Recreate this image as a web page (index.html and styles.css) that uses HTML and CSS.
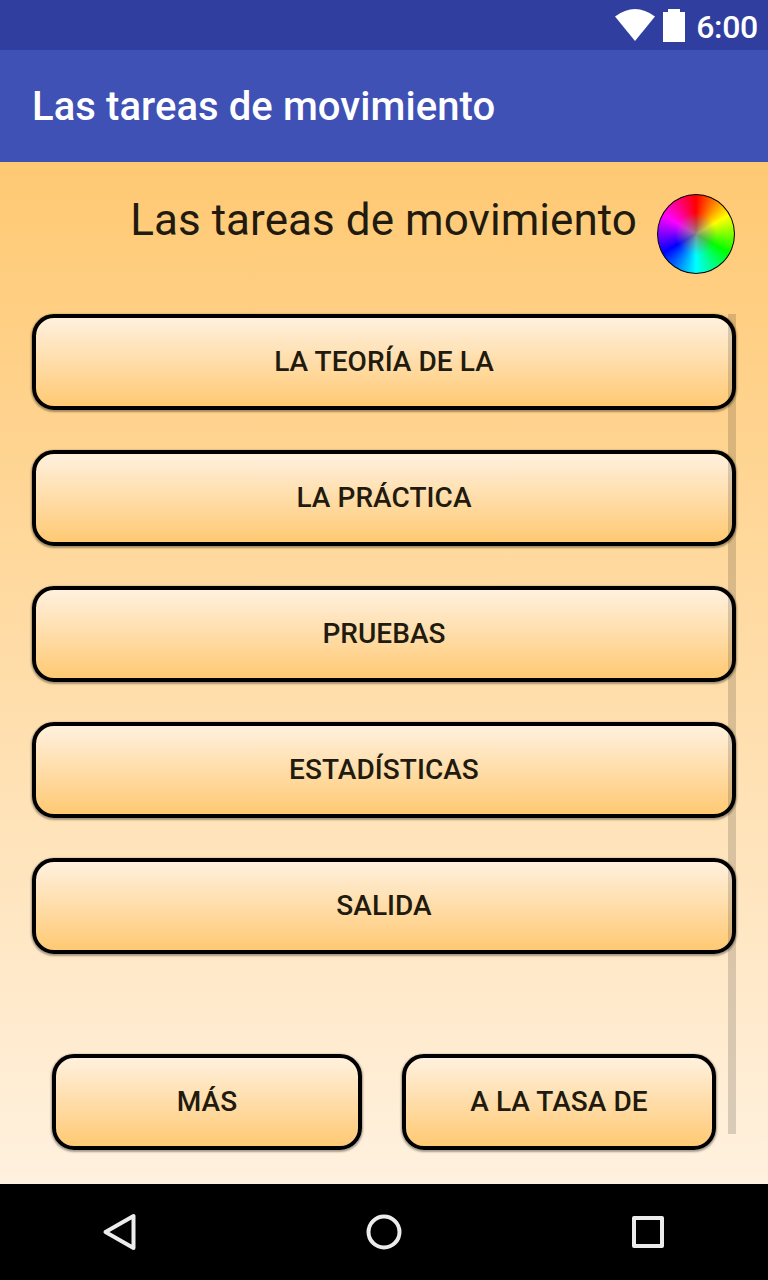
FILE: index.html
```html
<!DOCTYPE html>
<html lang="es">
<head>
    <meta charset="utf-8">
    <title>Las tareas de movimiento</title>
    <link rel="stylesheet" href="styles.css">
</head>
<body>
    <div class="status-bar">
        <svg class="wifi" width="40" height="32" viewBox="0 0 40 32">
            <path d="M0 7.5Q20 -7.5 40 7.5L20 32Z" fill="#fff"/>
        </svg>
        <svg class="battery" width="22" height="33" viewBox="0 0 22 33">
            <path d="M0 3H5V0H17V3H22V33H0Z" fill="#fff"/>
        </svg>
        <span class="clock">6:00</span>
    </div>
    <div class="app-bar">Las tareas de movimiento</div>

    <main class="content">
        <div class="header">
            <h1>Las tareas de movimiento</h1>
            <div class="color-wheel"></div>
        </div>
        <div class="menu">
            <button class="btn">LA TEORÍA DE LA</button>
            <button class="btn">LA PRÁCTICA</button>
            <button class="btn">PRUEBAS</button>
            <button class="btn">ESTADÍSTICAS</button>
            <button class="btn">SALIDA</button>
            <div class="scrollbar"></div>
        </div>
        <div class="footer">
            <button class="btn btn-more">MÁS</button>
            <button class="btn btn-rate">A LA TASA DE</button>
        </div>
    </main>

    <nav class="nav-bar">
        <svg width="48" height="48" viewBox="0 0 48 48">
            <path d="M9.5 24L37.5 8V40Z"/>
        </svg>
        <svg width="48" height="48" viewBox="0 0 48 48">
            <circle cx="24" cy="24" r="15.5"/>
        </svg>
        <svg width="48" height="48" viewBox="0 0 48 48">
            <rect x="10" y="10" width="28" height="28"/>
        </svg>
    </nav>
</body>
</html>
```
FILE: styles.css
```css
* {
    box-sizing: border-box;
}
body {
    margin: 0;
    width: 768px;
    height: 1280px;
    display: flex;
    flex-direction: column;
    font-family: Roboto, sans-serif;
    overflow: hidden;
}
.status-bar {
    height: 50px;
    padding: 9px 10px 0 0;
    display: flex;
    justify-content: flex-end;
    background-color: #303f9f;
    color: #fff;
}
.battery {
    margin-left: 8px;
}
.clock {
    margin-left: 11px;
    font-size: 32px;
    font-weight: 500;
    line-height: 36px;
    letter-spacing: -0.3px;
}
.app-bar {
    height: 112px;
    padding: 1px 0 0 32px;
    line-height: 112px;
    font-size: 40px;
    font-weight: 500;
    letter-spacing: 0.08px;
    background-color: #3f51b5;
    color: #fff;
}
.content {
    height: 1022px;
    padding: 32px;
    background: linear-gradient(#ffc973, #fff1df);
}
.header {
    height: 80px;
    display: flex;
    justify-content: flex-end;
}
h1 {
    margin: 0 20px 0 0;
    font-size: 44px;
    font-weight: 400;
    line-height: 52px;
    letter-spacing: 0.06px;
    white-space: nowrap;
    color: #211a0f;
}
.color-wheel {
    width: 78px;
    height: 80px;
    margin-right: 1px;
    border: 1px solid #000;
    border-radius: 50%;
    background:
        radial-gradient(closest-side, rgba(136, 136, 136, 0.9), rgba(136, 136, 136, 0) 55%),
        conic-gradient(#f00, #ff0, #0f0, #0ff, #00f, #f0f, #f00);
}
.menu {
    position: relative;
    margin-top: 40px;
    display: flex;
    flex-direction: column;
    gap: 40px;
}
.btn {
    height: 96px;
    padding: 0 0 2px;
    border: 4px solid #000;
    border-radius: 22px;
    background: linear-gradient(#fff1df, #ffc973) padding-box;
    box-shadow: 0 1px 2px 1px rgba(0, 0, 0, 0.35);
    font-family: inherit;
    font-size: 28px;
    font-weight: 500;
    letter-spacing: 0.06px;
    color: #211a0f;
}
/* runs down past the list, over the buttons' right edge */
.scrollbar {
    position: absolute;
    top: 0;
    right: 0;
    width: 8px;
    height: 820px;
    background-color: rgba(0, 0, 0, 0.15);
}
.footer {
    margin-top: 100px;
    padding: 0 20px;
    display: flex;
    gap: 40px;
}
.btn-more {
    width: 310px;
}
.btn-rate {
    width: 314px;
}
.nav-bar {
    height: 96px;
    padding: 0 96px;
    display: flex;
    justify-content: space-between;
    align-items: center;
    background-color: #000;
}
.nav-bar svg {
    fill: none;
    stroke: #ececec;
    stroke-width: 4;
    stroke-linejoin: round;
}
```
